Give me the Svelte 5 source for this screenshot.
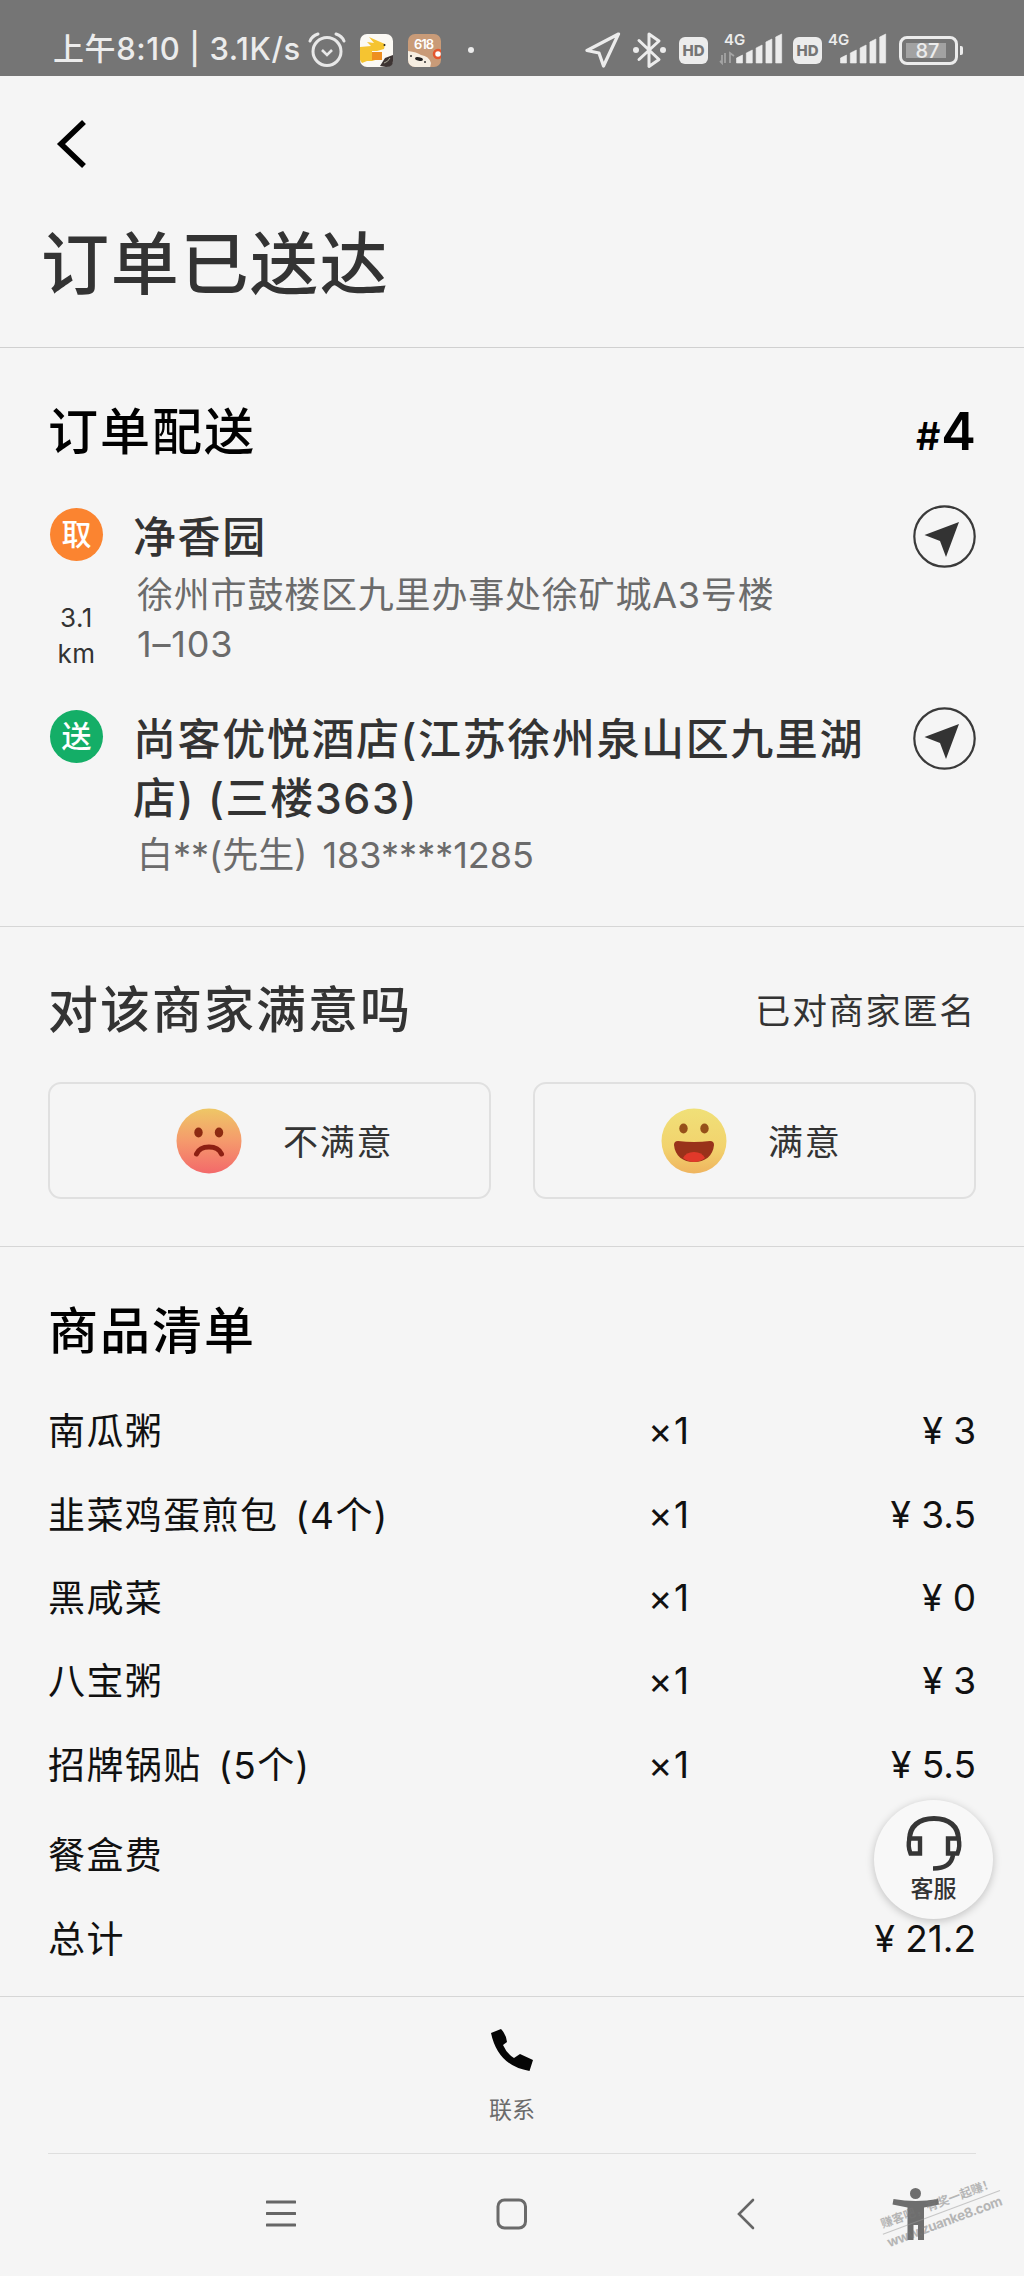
<script>
  const items = [
    { name: '南瓜粥', qty: 1, price: '3' },
    { name: '韭菜鸡蛋煎包 (4个)', qty: 1, price: '3.5' },
    { name: '黑咸菜', qty: 1, price: '0' },
    { name: '八宝粥', qty: 1, price: '3' },
    { name: '招牌锅贴 (5个)', qty: 1, price: '5.5' }
  ];

  const bars = [8, 13, 18, 24, 29];

  let rating = $state('');
</script>

{#snippet signal(arrows)}
  <svg class="signal" width="64" height="36" viewBox="0 0 64 36">
    <text x="5" y="14" class="net">4G</text>
    {#if arrows}
      <path d="M3 24v8l-2-2M6 32v-10M11 32v-10l4 3" fill="none" stroke="#a4a4a4" stroke-width="1.8" />
    {/if}
    {#each bars as h, i}
      <path d="M{17.5 + i * 9.8} {32 - h + 3}l6-3v{h}h-6z" fill="#ececec" stroke="#ececec" stroke-width="0.6" stroke-linejoin="round" />
    {/each}
  </svg>
{/snippet}

{#snippet locate()}
  <button class="locate" aria-label="导航">
    <svg width="63" height="63" viewBox="0 0 63 63">
      <circle cx="31.5" cy="31.5" r="30.2" fill="none" stroke="#3a3a3a" stroke-width="2.2" />
      <path d="M46 17L11.5 30l15.500 6L33 52z" fill="#333" />
    </svg>
  </button>
{/snippet}

<div class="screen">
  <div class="status">
    <span class="clock">上午8:10 | 3.1K/s</span>
    <svg class="alarm" width="38" height="36" viewBox="0 0 38 36" fill="none" stroke="#e8e8e8">
      <circle cx="19" cy="19.500" r="14" stroke-width="3" />
      <path d="M2 9q2-5 8-7M36 9q-2-5-8-7" stroke-width="3" stroke-linecap="round" />
      <path d="M14 18l5 5 5-5" stroke-width="2.6" />
    </svg>
    <svg class="app" width="33" height="33" viewBox="0 0 33 33">
      <rect width="33" height="33" rx="7" fill="#fbf9f4" />
      <path d="M0 13l11-1-4-4 7 1-5-6 9 4 7 3-1 5-7 2h-5v2h10v5l-10 3H7l-5 2-2-3z" fill="#f5c431" />
      <path d="M12 18h10v8H12z" fill="#ee8f20" />
      <circle cx="24.500" cy="11" r="1" fill="#222" />
      <path d="M20 32l5-8 8-3v6q0 6-7 6z" fill="#3d3433" />
      <path d="M24 29q4-1 6-5" stroke="#aa9" fill="none" />
    </svg>
    <svg class="app" width="33" height="33" viewBox="0 0 33 33">
      <defs><clipPath id="tile"><rect width="33" height="33" rx="7" /></clipPath></defs>
      <g clip-path="url(#tile)">
        <rect width="33" height="33" fill="#c99b78" />
        <path d="M0 17q9 1 13 4 8 1 10 8l-1 5H0z" fill="#f6eee2" />
        <ellipse cx="11" cy="25" rx="4" ry="1.800" fill="#222" transform="rotate(12 11 25)" />
        <circle cx="3" cy="22" r="1" fill="#333" />
        <circle cx="17" cy="28" r="1" fill="#333" />
        <circle cx="30" cy="20" r="4" fill="#fff" stroke="#e4572e" stroke-width="2.500" />
        <text x="6" y="14.500" class="promo">618</text>
      </g>
    </svg>
    <i class="more"></i>
    <svg class="gps" width="36" height="36" viewBox="0 0 36 36">
      <path d="M33.500 2L2 18.500l12 2.500 4.500 13z" fill="none" stroke="#ececec" stroke-width="3.200" stroke-linejoin="round" />
    </svg>
    <svg class="bt" width="36" height="38" viewBox="0 0 36 38">
      <path d="M7 9.500l20 19-10 7V3l10 7-20 18.500" fill="none" stroke="#ececec" stroke-width="3" stroke-linejoin="round" stroke-linecap="round" />
      <circle cx="4" cy="19" r="3" fill="#ececec" />
      <circle cx="31" cy="19" r="3" fill="#ececec" />
    </svg>
    <span class="hd hd-one">HD</span>
    {@render signal(true)}
    <span class="hd hd-two">HD</span>
    {@render signal(false)}
    <span class="battery"><b>87</b></span>
    <i class="cap"></i>
  </div>

  <header>
    <button class="back" aria-label="返回">
      <svg width="36" height="52" viewBox="0 0 36 52">
        <path d="M33 4L10 26l23 22" fill="none" stroke="#000" stroke-width="5.600" />
      </svg>
    </button>
    <h1>订单已送达</h1>
  </header>

  <section class="delivery">
    <div class="head">
      <h2 class="black">订单配送</h2>
      <span class="number"><small>#</small>4</span>
    </div>
    <div class="stop">
      <div class="side">
        <span class="badge pick">取</span>
        <span class="distance">3.1<br />km</span>
      </div>
      <div class="place">
        <strong>净香园</strong>
        <p>徐州市鼓楼区九里办事处徐矿城A3号楼<br />1–103</p>
      </div>
      {@render locate()}
    </div>
    <div class="stop second">
      <div class="side">
        <span class="badge drop">送</span>
      </div>
      <div class="place">
        <strong>尚客优悦酒店(江苏徐州泉山区九里湖<br />店) (三楼363)</strong>
        <p class="phone">白**(先生) 183****1285</p>
      </div>
      {@render locate()}
    </div>
  </section>

  <section class="rate">
    <div class="head">
      <h2>对该商家满意吗</h2>
      <span class="anon">已对商家匿名</span>
    </div>
    <div class="choices">
      <button class="choice" aria-pressed={rating === 'bad'} onclick={() => (rating = 'bad')}>
        <svg width="66" height="66" viewBox="0 0 66 66">
          <defs>
            <linearGradient id="sad" x2="0" y2="1">
              <stop offset="0" stop-color="#eec766" />
              <stop offset="0.5" stop-color="#f59a6c" />
              <stop offset="1" stop-color="#f3696a" />
            </linearGradient>
          </defs>
          <circle cx="33" cy="33" r="32.500" fill="url(#sad)" />
          <ellipse cx="22.500" cy="24.500" rx="4.200" ry="5" fill="#8d2b12" />
          <ellipse cx="43" cy="24.500" rx="4.200" ry="5" fill="#8d2b12" />
          <path d="M20.500 46q3-7 12.500-7t12.500 7" fill="none" stroke="#8d2013" stroke-width="5" stroke-linecap="round" />
        </svg>
        <span>不满意</span>
      </button>
      <button class="choice" aria-pressed={rating === 'good'} onclick={() => (rating = 'good')}>
        <svg width="66" height="66" viewBox="0 0 66 66">
          <defs>
            <linearGradient id="glad" x2="0" y2="1">
              <stop offset="0" stop-color="#f0e078" />
              <stop offset="0.6" stop-color="#f2d36d" />
              <stop offset="1" stop-color="#efb45f" />
            </linearGradient>
          </defs>
          <circle cx="33" cy="33" r="32.500" fill="url(#glad)" />
          <ellipse cx="22.500" cy="20.500" rx="4.200" ry="5" fill="#96501a" />
          <ellipse cx="43.500" cy="20.500" rx="4.200" ry="5" fill="#96501a" />
          <path d="M13 37q0-4 4-4 16 2 32 0 4 0 4 4c-1 11-9 17-20 17s-19-6-20-17z" fill="#99321a" />
          <path d="M22 50q3-6 11-6t11 6q-5 4-11 4t-11-4z" fill="#e0392a" />
        </svg>
        <span>满意</span>
      </button>
    </div>
  </section>

  <section class="goods">
    <h2 class="black">商品清单</h2>
    <div class="rows">
      {#each items as item}
        <div class="row">
          <span class="name">{item.name}</span>
          <span>×{item.qty}</span>
          <span class="price">¥ {item.price}</span>
        </div>
      {/each}
    </div>
    <div class="row fee"><span class="name">餐盒费</span></div>
    <div class="row">
      <span class="name">总计</span>
      <span></span>
      <span class="price">¥ 21.2</span>
    </div>
    <button class="service">
      <svg width="58" height="58" viewBox="0 0 58 58" fill="none" stroke="#363636">
        <path d="M4.500 25C4.500 11 14 3.500 29 3.500S53.500 11 53.500 25" stroke-width="5" />
        <path d="M4.500 23.500h10.500v15H5.500Q2.500 31 4.500 23.500zM53.500 23.500H43v15h9.500Q55.500 31 53.500 23.500z" stroke-width="4.400" />
        <path d="M48 40q-2 13.500-20 13.500" stroke-width="4.600" />
      </svg>
      <span>客服</span>
    </button>
  </section>

  <footer>
    <svg width="44" height="44" viewBox="0 0 44 44">
      <path d="M1 5L11 1q5 5 6 13l-4 3q4 9 11 13l6-4 13 6-3.500 11Q8 38 1 5z" fill="#050505" />
    </svg>
    <span>联系</span>
  </footer>

  <nav>
    <svg class="menu" width="30" height="30" viewBox="0 0 30 30">
      <path d="M1 3h28M1 14.500h28M1 26h28" stroke="#666" stroke-width="3" stroke-linecap="round" />
    </svg>
    <svg class="home" width="32" height="32" viewBox="0 0 32 32">
      <rect x="2" y="2" width="27.500" height="28" rx="6.500" fill="none" stroke="#6a6a6a" stroke-width="3" />
    </svg>
    <svg class="prev" width="20" height="32" viewBox="0 0 20 32">
      <path d="M17 2L3 16l14 14" fill="none" stroke="#666" stroke-width="2.600" stroke-linecap="round" />
    </svg>
    <svg class="person" width="48" height="54" viewBox="0 0 48 54">
      <circle cx="23.500" cy="6.500" r="5.500" fill="#6e6e6e" />
      <path d="M1.500 12q22 4 44.500 0l1 5.500-15 3V53h-6V38h-4.500v15h-6V20.500L.5 17.500z" fill="#6e6e6e" />
    </svg>
    <div class="mark">
      <span class="slogan">赚客吧，有奖一起赚！</span>
      <span class="site">www.zuanke8.com</span>
    </div>
  </nav>
</div>

<style>
  :global(body) {
    margin: 0;
    background: #f5f5f5;
  }
  .screen {
    width: 1024px;
    height: 2276px;
    overflow: hidden;
    background: #f5f5f5;
    color: #333;
    font-family: Inter, 'Noto Sans CJK SC', sans-serif;
    display: flex;
    flex-direction: column;
  }
  .screen > * { box-sizing: border-box; flex: none; }
  svg { display: block; flex: none; }
  h1, h2, p { margin: 0; font-weight: 500; }
  button {
    font: inherit;
    color: inherit;
    background: none;
    border: 0;
    padding: 0;
    cursor: pointer;
  }

  /* status bar */
  .status {
    height: 76px;
    padding: 24px 0 0 53px;
    background: #757575;
    color: #ececec;
    display: flex;
    align-items: center;
  }
  .clock {
    width: 255px;
    font-size: 31px;
    font-weight: 500;
    line-height: 38px;
    padding-bottom: 3px;
    white-space: nowrap;
    letter-spacing: 0.6px;
  }
  .alarm { margin-right: 14px; }
  .app { margin-right: 15px; }
  .promo {
    font: 600 13px Inter, sans-serif;
    fill: #fff;
    letter-spacing: -1px;
  }
  .more {
    width: 6px;
    height: 6px;
    margin-left: 12px;
    border-radius: 50%;
    background: #ececec;
  }
  .gps { margin-left: 111px; }
  .bt { margin-left: 11px; }
  .hd {
    width: 29px;
    height: 27px;
    border-radius: 6px;
    background: #ececec;
    color: #757575;
    font-size: 15px;
    font-weight: 800;
    line-height: 27px;
    text-align: center;
  }
  .hd-one { margin-left: 11px; }
  .hd-two { margin-left: 10px; }
  .signal { margin: 0 0 2px 11px; }
  .hd-two + .signal { margin-left: 1px; }
  .net {
    font: 600 15px Inter, sans-serif;
    fill: #ececec;
  }
  .battery {
    box-sizing: border-box;
    width: 59px;
    height: 29px;
    margin-left: 12px;
    border: 3px solid #ececec;
    border-radius: 8px;
    padding: 4px;
  }
  .battery b {
    display: block;
    width: 40px;
    height: 15px;
    background: #a2a2a2;
    font-size: 20px;
    font-weight: 500;
    line-height: 16px;
    text-align: center;
    text-indent: 3px;
  }
  .cap {
    width: 3px;
    height: 9px;
    margin-left: 2px;
    border-radius: 0 2px 2px 0;
    background: #ececec;
  }

  header {
    height: 272px;
    padding: 42px 41px 0;
    border-bottom: 1px solid #d0d0d0;
  }
  .back { display: block; margin-left: 10px; }
  h1 {
    margin-top: 49px;
    font-size: 68px;
    line-height: 90px;
    letter-spacing: 1.7px;
  }

  section {
    padding: 54px 48px 0;
    border-bottom: 1px solid #d6d6d6;
  }
  h2 {
    font-size: 50px;
    line-height: 60px;
    letter-spacing: 2px;
  }
  .black { color: #000; }
  .head {
    display: flex;
    justify-content: space-between;
    align-items: center;
    height: 60px;
  }

  .delivery { height: 579px; }
  .number {
    color: #000;
    font-size: 52px;
    font-weight: 600;
    line-height: 60px;
    padding-top: 3px;
  }
  .number small { font-size: 38px; margin-right: 1px; }
  .stop {
    display: flex;
    align-items: flex-start;
    margin-top: 46px;
  }
  .second { margin-top: 38px; }
  .side {
    width: 57px;
    display: flex;
    flex-direction: column;
    align-items: center;
  }
  .badge {
    width: 53px;
    height: 53px;
    border-radius: 50%;
    color: #fff;
    font-size: 30px;
    font-weight: 500;
    line-height: 53px;
    text-align: center;
  }
  .pick { background: #fb8430; }
  .drop { background: #14ae67; }
  .distance {
    margin-top: 39px;
    font-size: 26px;
    line-height: 36px;
    text-align: center;
    letter-spacing: 0.5px;
  }
  .place { margin-left: 28px; flex: 1; white-space: nowrap; }
  .place strong {
    display: block;
    font-size: 43px;
    font-weight: 500;
    line-height: 59px;
    letter-spacing: 1.6px;
  }
  .place p {
    margin: 4px 0 0 4px;
    color: #6b6b6b;
    font-size: 36px;
    font-weight: 400;
    line-height: 49px;
    letter-spacing: 0.8px;
  }
  .place .phone { margin-top: 3px; letter-spacing: 0; word-spacing: 5px; }
  .locate { margin: -3px 0 0 0; }

  .rate { height: 320px; padding-top: 53px; }
  .anon {
    font-size: 35px;
    letter-spacing: 1.8px;
    padding-bottom: 3px;
  }
  .choices {
    display: flex;
    justify-content: space-between;
    margin-top: 42px;
  }
  .choice {
    box-sizing: border-box;
    width: 443px;
    height: 117px;
    border: 2px solid #e0e0e0;
    border-radius: 13px;
    display: flex;
    align-items: center;
    padding-left: 126px;
    gap: 41px;
    font-size: 35px;
    letter-spacing: 1.8px;
  }
  .choice span { padding-bottom: 2px; }

  .goods { position: relative; height: 750px; color: #111; }
  .rows { margin-top: 28px; }
  .row {
    display: grid;
    grid-template-columns: 600px 150px 1fr;
    align-items: center;
    height: 83.4px;
    font-size: 37px;
    letter-spacing: 1.4px;
    white-space: nowrap;
  }
  .name { padding-bottom: 3px; word-spacing: 5px; }
  .fee { margin-top: 7px; }
  .price { text-align: right; letter-spacing: 0; }

  /* floats over the list */
  .service {
    position: absolute;
    right: 31px;
    top: 553px;
    width: 119px;
    height: 119px;
    border-radius: 50%;
    background: #f8f8f8;
    box-shadow: 0 2px 8px rgba(0, 0, 0, 0.22);
    color: #333;
    font-size: 23px;
    font-weight: 500;
    line-height: 28px;
    display: flex;
    flex-direction: column;
    align-items: center;
    padding-top: 15px;
    gap: 2px;
  }

  footer {
    height: 157px;
    margin: 0 48px;
    padding-top: 31px;
    border-bottom: 1px solid #dedede;
    display: flex;
    flex-direction: column;
    align-items: center;
    gap: 24px;
    color: #6b6b6b;
    font-size: 23px;
    line-height: 28px;
  }

  nav {
    position: relative;
    height: 122px;
    display: flex;
    align-items: center;
    padding: 0 0 2px 266px;
  }
  .home { margin-left: 200px; }
  .prev { margin-left: 208px; }
  .person { margin-left: 136px; }
  .mark {
    position: absolute;
    left: 868px;
    top: 40px;
    width: 146px;
    transform: rotate(-20.500deg);
    color: #777;
    opacity: 0.5;
    font-weight: 700;
    text-align: center;
    white-space: nowrap;
  }
  .mark span { display: block; }
  .slogan {
    width: 125px;
    margin: 0 auto;
    border-bottom: 1px solid #999;
    font-size: 12px;
    line-height: 18px;
  }
  .site { font-size: 13.500px; line-height: 18px; letter-spacing: -0.4px; }
</style>
